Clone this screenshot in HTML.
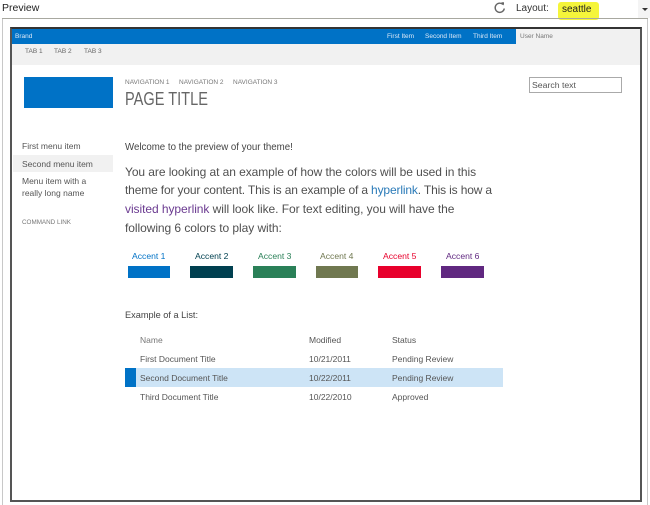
<!DOCTYPE html>
<html><head><meta charset="utf-8"><style>
html,body{margin:0;padding:0;background:#fff}
body{width:650px;height:505px;position:relative;overflow:hidden;font-family:"Liberation Sans",sans-serif;color:#444}
.a{position:absolute;white-space:nowrap}
.t{position:absolute;white-space:nowrap;line-height:12px}
.m{font-size:8.5px;color:#555}
.w{color:#dfeaf7;font-size:6.5px}
.p{font-size:12px;left:125px;color:#505050;line-height:18px}
.l{font-size:8.5px;color:#555}
.sw{position:absolute;top:266px;height:12px}
.c{font-size:8.6px}
</style></head><body>
<div class="t" style="left:2px;top:2px;font-size:10.5px;color:#222">Preview</div>
<svg class="a" style="left:493px;top:1px" width="14" height="14" viewBox="0 0 14 14"><path d="M10 3.5A4.6 4.6 0 1 0 11.3 7.5" fill="none" stroke="#666" stroke-width="1.4"/><path d="M8.2 1.2L11 1.2L11 4.5Z" fill="#666"/></svg>
<div class="t" style="left:516px;top:3px;font-size:10px;color:#333">Layout:</div>
<div class="a" style="left:558px;top:2px;width:41px;height:18px;background:#f5f53a;border-radius:3px"></div>
<div class="t" style="left:562px;top:4px;font-size:10px;color:#222">seattle</div>
<div class="a" style="left:638px;top:0;width:12px;height:18px;background:#f4f4f4"></div>
<div class="a" style="left:642px;top:8px;border:3px solid transparent;border-top:3px solid #333;border-bottom:0"></div>
<div class="a" style="left:2px;top:18px;width:646px;height:487px;border:1px solid #c8c8c8;border-bottom:0;box-sizing:border-box"></div>
<div class="a" style="left:2px;top:18px;width:646px;height:1px;background:#a8a8a0"></div>
<div class="a" style="left:10px;top:27px;width:632px;height:475px;border:2px solid #555;border-top-color:#333;box-sizing:border-box;background:#fff"></div>
<div class="a" style="left:12px;top:29px;width:504px;height:15px;background:#0072c6"></div>
<div class="a" style="left:12px;top:44px;width:628px;height:21px;background:#f1f1f1"></div>
<div class="a" style="left:516px;top:29px;width:124px;height:15px;background:#f1f1f1"></div>
<div class="t w" style="left:15px;top:31px">Brand</div>
<div class="t w" style="left:387px;top:31px">First Item</div>
<div class="t w" style="left:425px;top:31px">Second Item</div>
<div class="t w" style="left:473px;top:31px">Third Item</div>
<div class="t" style="left:520px;top:31px;font-size:6.5px;color:#777">User Name</div>
<div class="t" style="left:25px;top:46px;font-size:6.5px;color:#666">TAB 1</div>
<div class="t" style="left:54px;top:46px;font-size:6.5px;color:#666">TAB 2</div>
<div class="t" style="left:84px;top:46px;font-size:6.5px;color:#666">TAB 3</div>
<div class="a" style="left:24px;top:77px;width:89px;height:31px;background:#0072c6"></div>
<div class="t" style="left:125px;top:77px;font-size:6.5px;color:#777">NAVIGATION 1</div>
<div class="t" style="left:179px;top:77px;font-size:6.5px;color:#777">NAVIGATION 2</div>
<div class="t" style="left:233px;top:77px;font-size:6.5px;color:#777">NAVIGATION 3</div>
<div class="a" style="left:125px;top:89px;font-size:18px;line-height:20px;color:#666;transform:scaleX(.81);transform-origin:0 0">PAGE TITLE</div>
<div class="a" style="left:529px;top:77px;width:93px;height:16px;border:1px solid #aaa;box-sizing:border-box"></div>
<div class="t" style="left:532px;top:79px;font-size:8.7px;color:#555">Search text</div>
<div class="a" style="left:13px;top:155px;width:100px;height:17px;background:#f1f1f1"></div>
<div class="t m" style="left:22px;top:140px">First menu item</div>
<div class="t m" style="left:22px;top:158px">Second menu item</div>
<div class="t m" style="left:22px;top:175px">Menu item with a</div>
<div class="t m" style="left:22px;top:187px">really long name</div>
<div class="t" style="left:22px;top:217px;font-size:6.3px;color:#777">COMMAND LINK</div>
<div class="t" style="left:125px;top:142px;font-size:9.7px;color:#444">Welcome to the preview of your theme!</div>
<div class="a p" style="top:163px;letter-spacing:-.07px">You are looking at an example of how the colors will be used in this</div>
<div class="a p" style="top:181px;letter-spacing:-.15px">theme for your content. This is an example of a <span style="color:#2a7ab8">hyperlink</span>. This is how a</div>
<div class="a p" style="top:200px;letter-spacing:-.06px"><span style="color:#6a3a90">visited hyperlink</span> will look like. For text editing, you will have the</div>
<div class="a p" style="top:219px;letter-spacing:-.06px">following 6 colors to play with:</div>
<div class="t c" style="left:132px;top:250px;color:#0072c6">Accent 1</div>
<div class="t c" style="left:195px;top:250px;color:#004050">Accent 2</div>
<div class="t c" style="left:258px;top:250px;color:#2a8058">Accent 3</div>
<div class="t c" style="left:320px;top:250px;color:#707850">Accent 4</div>
<div class="t c" style="left:383px;top:250px;color:#e8002c">Accent 5</div>
<div class="t c" style="left:446px;top:250px;color:#602880">Accent 6</div>
<div class="sw" style="left:128px;width:42px;background:#0072c6"></div>
<div class="sw" style="left:190px;width:43px;background:#004050"></div>
<div class="sw" style="left:253px;width:43px;background:#2a8058"></div>
<div class="sw" style="left:316px;width:42px;background:#707850"></div>
<div class="sw" style="left:378px;width:43px;background:#e8002c"></div>
<div class="sw" style="left:441px;width:43px;background:#602880"></div>
<div class="t" style="left:125px;top:309px;font-size:9.2px;color:#444">Example of a List:</div>
<div class="a" style="left:125px;top:368px;width:378px;height:19px;background:#cde4f6"></div>
<div class="a" style="left:125px;top:368px;width:11px;height:19px;background:#0072c6"></div>
<div class="t l" style="left:140px;top:334px;color:#777">Name</div>
<div class="t l" style="left:309px;top:334px">Modified</div>
<div class="t l" style="left:392px;top:334px">Status</div>
<div class="t l" style="left:140px;top:353px">First Document Title</div>
<div class="t l" style="left:309px;top:353px">10/21/2011</div>
<div class="t l" style="left:392px;top:353px">Pending Review</div>
<div class="t l" style="left:140px;top:372px">Second Document Title</div>
<div class="t l" style="left:309px;top:372px">10/22/2011</div>
<div class="t l" style="left:392px;top:372px">Pending Review</div>
<div class="t l" style="left:140px;top:391px">Third Document Title</div>
<div class="t l" style="left:309px;top:391px">10/22/2010</div>
<div class="t l" style="left:392px;top:391px">Approved</div>
</body></html>
